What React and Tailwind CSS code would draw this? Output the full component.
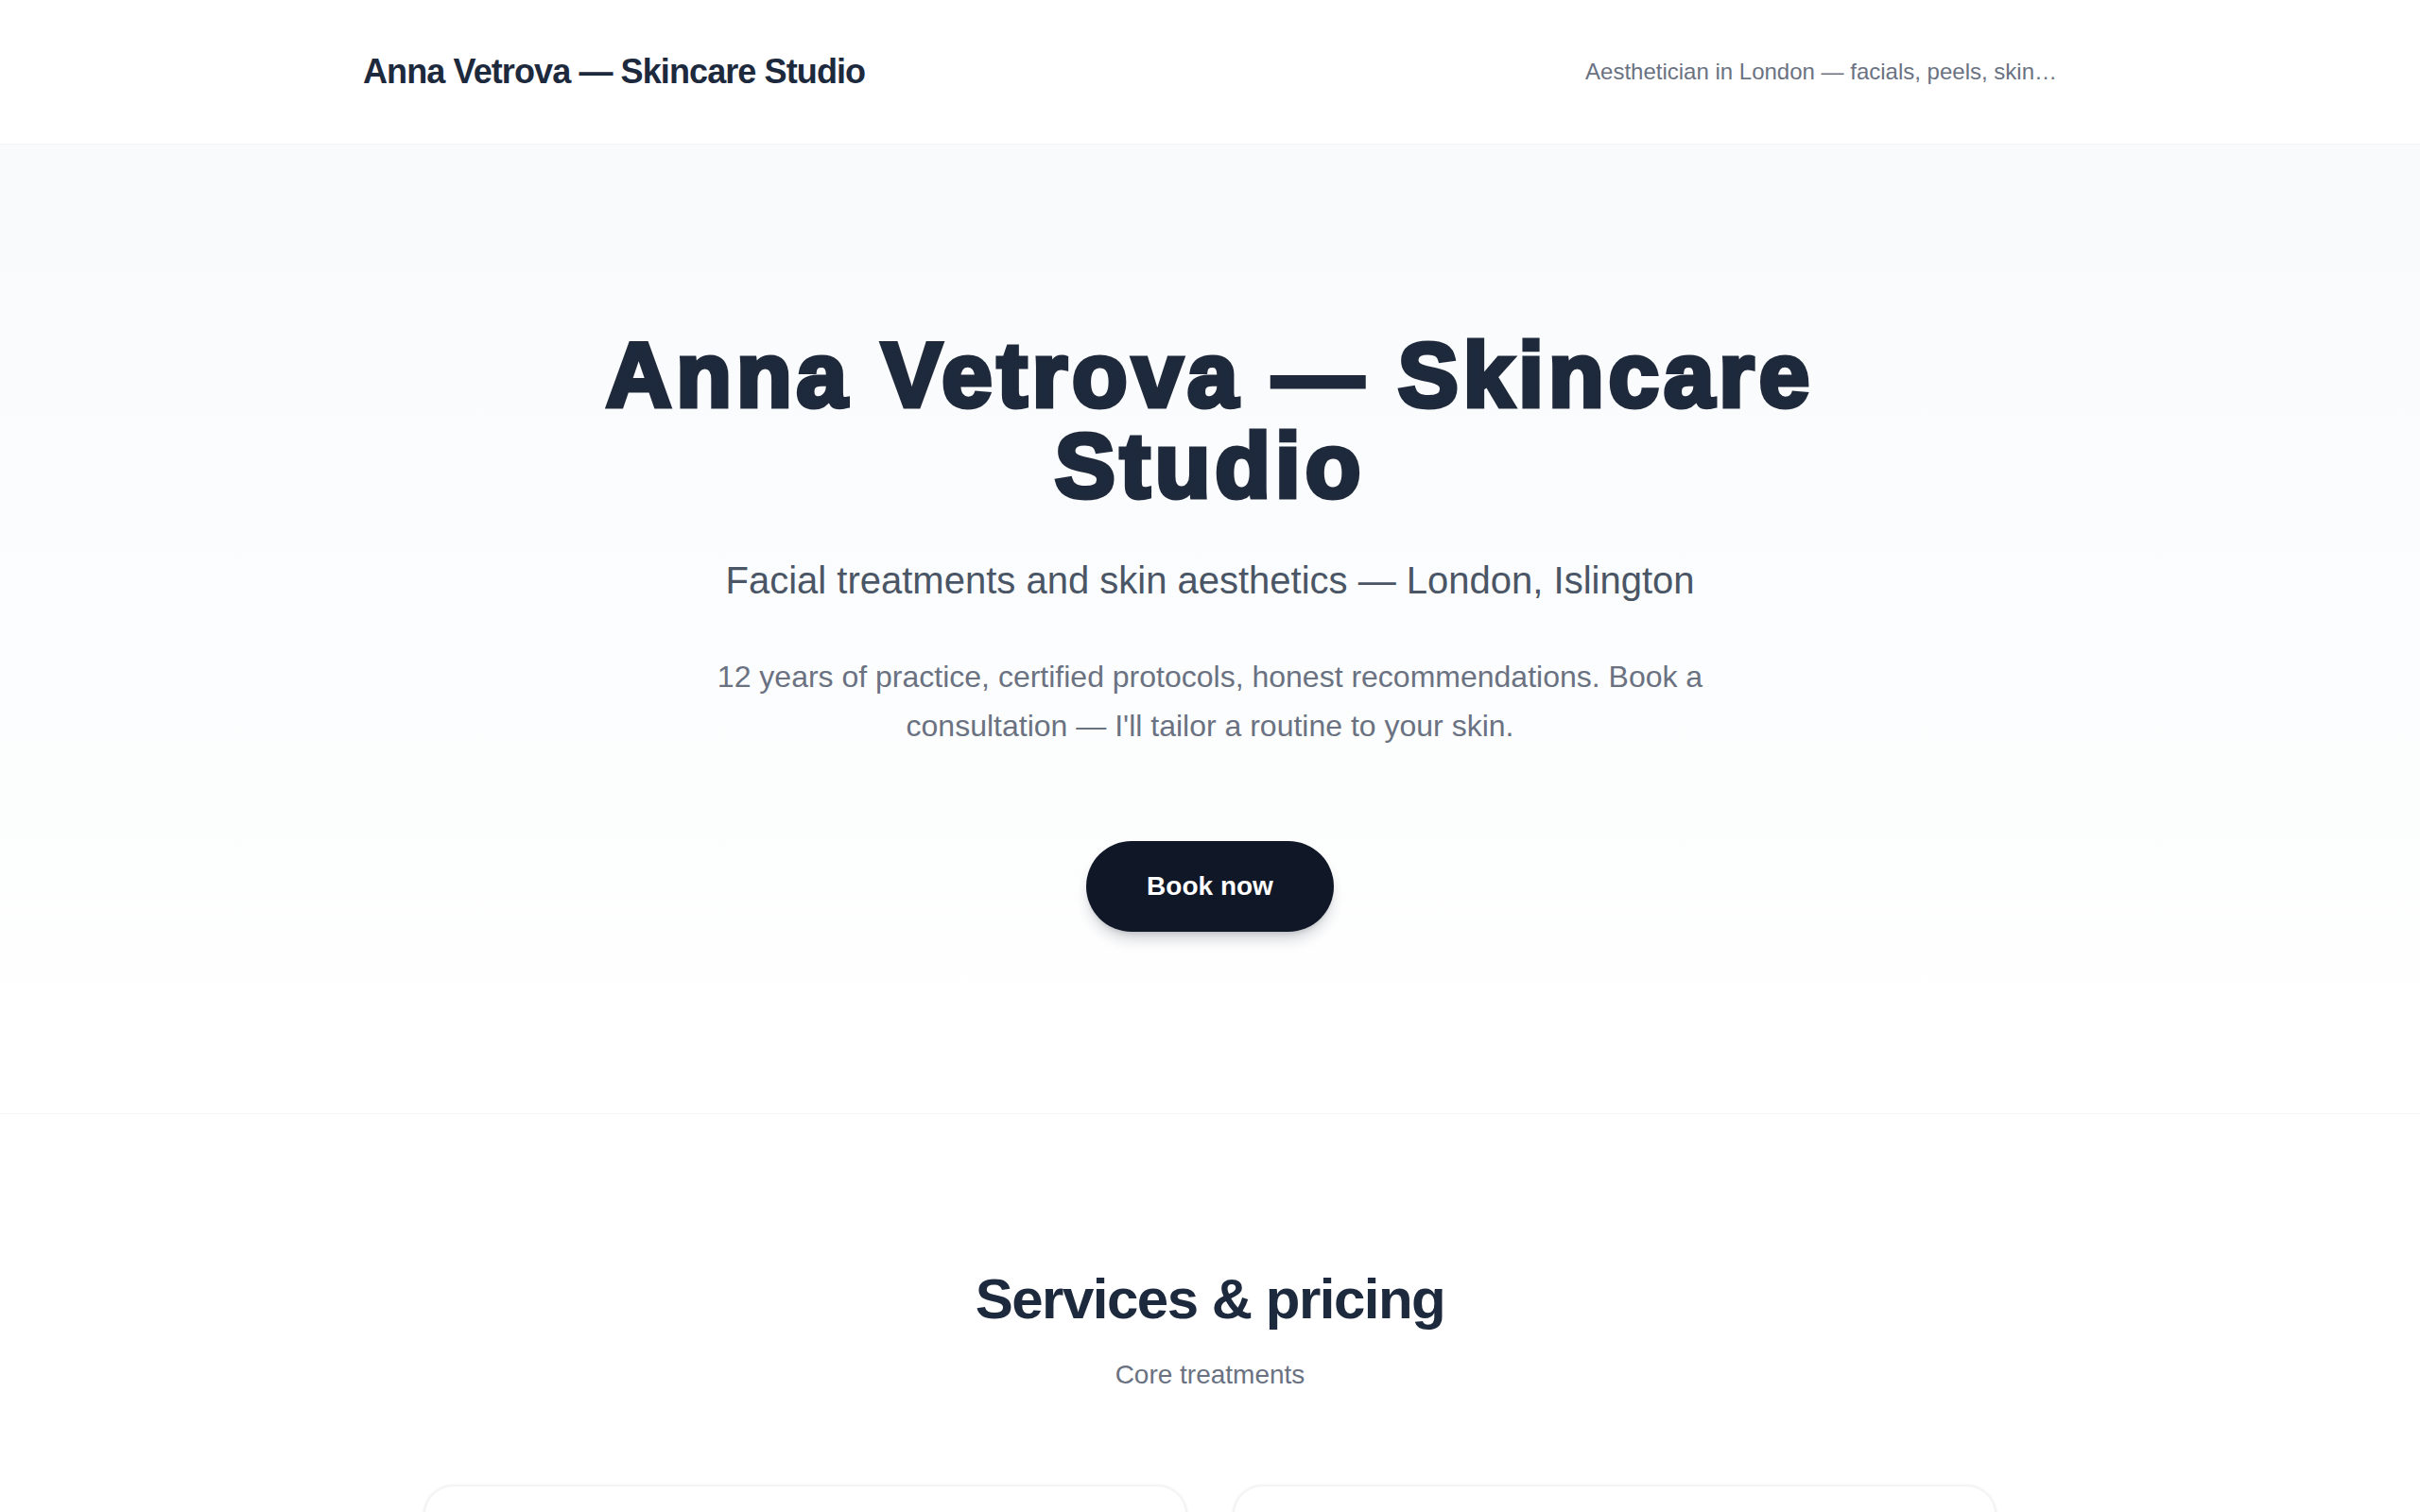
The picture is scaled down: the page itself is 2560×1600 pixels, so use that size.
import React from 'react';

const services = [
  { name: 'Signature facial', time: '60 min', price: '£85', note: 'Cleanse, exfoliation, extraction, mask and massage.' },
  { name: 'Chemical peel', time: '45 min', price: '£95', note: 'Medium-depth peel matched to your skin type.' },
];

const App = () => {
  return (
    <div className="min-h-screen bg-white font-['Liberation_Sans',Arial,sans-serif] text-slate-800">
      {/* Header */}
      <header className="border-b border-gray-100 bg-white">
        <div className="mx-auto flex max-w-[1792px] items-center justify-between py-12">
          <span className="text-[36px] font-bold leading-[56px] tracking-tight text-slate-800">
            Anna Vetrova — Skincare Studio
          </span>
          <span className="max-w-[500px] truncate text-[24px] leading-[32px] text-gray-500">
            Aesthetician in London — facials, peels, skin…
          </span>
        </div>
      </header>

      {/* Hero */}
      <section className="border-b border-gray-100 bg-gradient-to-b from-slate-50 to-white pt-[196px] pb-[192px]">
        <div className="mx-auto flex max-w-[1792px] flex-col items-center text-center">
          <h1 className="max-w-[1600px] text-[96px] font-black leading-[96px] tracking-[5px] text-slate-800 [-webkit-text-stroke:5px_#1e293b]">
            Anna Vetrova — Skincare Studio
          </h1>
          <p className="mt-[45px] text-[40px] leading-[56px] text-gray-600">
            Facial treatments and skin aesthetics — London, Islington
          </p>
          <p className="mt-12 max-w-[1152px] text-[32px] leading-[52px] text-gray-500">
            12 years of practice, certified protocols, honest recommendations. Book a consultation — I'll tailor a routine to your skin.
          </p>
          <button className="mt-24 rounded-full bg-gray-900 px-16 py-7 text-[28px] font-bold leading-[40px] text-white shadow-lg shadow-gray-900/20">
            Book now
          </button>
        </div>
      </section>

      {/* Services */}
      <section className="py-[160px]">
        <div className="mx-auto max-w-[1792px] px-16">
          <h2 className="text-center text-[60px] font-bold leading-[72px] tracking-tight text-slate-800">
            Services &amp; pricing
          </h2>
          <p className="mt-6 text-center text-[28px] leading-[40px] text-gray-500">Core treatments</p>

          <div className="mt-24 grid grid-cols-2 gap-12">
            {services.map((s) => (
              <div key={s.name} className="rounded-[32px] border-2 border-gray-100 bg-white px-16 pt-24 pb-16 shadow-sm">
                <div className="flex items-baseline justify-between">
                  <h3 className="text-[40px] font-bold leading-[56px] text-slate-800">{s.name}</h3>
                  <span className="text-[36px] font-bold text-slate-800">{s.price}</span>
                </div>
                <p className="mt-2 text-[28px] text-gray-500">{s.time}</p>
                <p className="mt-6 text-[30px] leading-[48px] text-gray-600">{s.note}</p>
              </div>
            ))}
          </div>
        </div>
      </section>
    </div>
  );
};

export default App;
